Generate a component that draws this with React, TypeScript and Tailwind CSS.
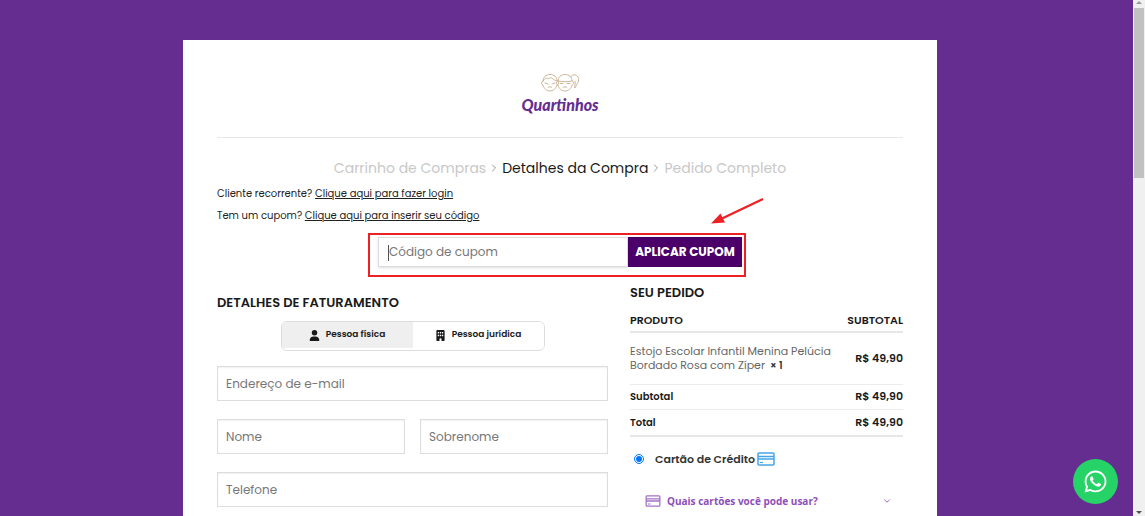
import { ChevronDown, ChevronRight } from "lucide-react";
import { useState } from "react";
import type { ReactNode } from "react";
import { FaBuilding, FaUser, FaWhatsapp } from "react-icons/fa6";

type PersonType = "fisica" | "juridica";

interface FieldProps {
  id: string;
  label: string;
  type?: string;
}

const steps = [
  { label: "Carrinho de Compras", active: false },
  { label: "Detalhes da Compra", active: true },
  { label: "Pedido Completo", active: false },
];

const totals = [
  { label: "Subtotal", value: "R$ 49,90" },
  { label: "Total", value: "R$ 49,90" },
];

const personTypes: { id: PersonType; label: string; icon: ReactNode }[] = [
  { id: "fisica", label: "Pessoa física", icon: <FaUser size={11} /> },
  { id: "juridica", label: "Pessoa jurídica", icon: <FaBuilding size={11} /> },
];

function Field({ id, label, type = "text" }: FieldProps) {
  return (
    <input
      id={id}
      type={type}
      aria-label={label}
      placeholder={label}
      className="h-[35px] w-full min-w-0 border border-[#dddddd] bg-white px-2 text-xs text-[#333333] shadow-[inset_0_1px_2px_rgba(0,0,0,0.06)] outline-none placeholder:text-[#777777]"
    />
  );
}

function Logo() {
  return (
    <a
      href="#inicio"
      aria-label="Quartinhos"
      className="flex flex-col items-center text-[#662d91]"
    >
      <svg
        width="40"
        height="20"
        viewBox="0 0 40 20"
        fill="none"
        stroke="#cdb598"
        strokeWidth="1"
        strokeLinecap="round"
      >
        <path d="M3 8C3 4 6 1.500 10 1.500S17 4 17 8c2 0 2 4 0 4-1 4-4 6-7 6s-6-2-7-6c-2 0-2-4 0-4Z" />
        <path d="M3 8c1-1 2-3 3-3 2 2 4-1 6 0 1 1 3 3 5 3M5 10l3 1M12 11l3-1M8 14.500c1-1 3-1 4 0" />
        <path d="M18 8c0-4 3-6.500 7-6.500S32 4 32 8c2 0 2 4 0 4-1 4-4 6-7 6s-6-2-7-6c-2 0-2-4 0-4Z" />
        <path d="M18 8c4 1 10 1 14 0M20 10.500h3M27 10.500h3M23 14.500c1-1 3-1 4 0" />
        <path d="M31 4c1-3 5-3 7 0 2 4-1 7-3 11-1-2 1-4 0-7" />
      </svg>
      <span className="font-['Lato','Liberation_Sans',sans-serif] text-base leading-6 font-black italic">
        Quartinhos
      </span>
    </a>
  );
}

function CardIcon({ className, size }: { className: string; size: number }) {
  return (
    <svg
      width={size}
      height={size - 4}
      viewBox="0 0 18 14"
      fill="none"
      stroke="currentColor"
      className={className}
    >
      <rect x="1" y="1" width="16" height="12" rx="1" strokeWidth="1.500" />
      <path d="M1 4.500h16M1 7h16" strokeWidth="1.500" />
      <path d="M3 10.500h3" strokeWidth="1.200" />
    </svg>
  );
}

function CouponForm() {
  return (
    <form
      className="relative mx-auto flex h-[30px] w-full max-w-[364px]"
      onSubmit={(e) => e.preventDefault()}
    >
      <input
        type="text"
        aria-label="Código de cupom"
        placeholder="Código de cupom"
        className="min-w-0 flex-1 border border-[#dddddd] bg-white px-2.5 text-xs text-[#333333] shadow-sm outline-none placeholder:text-[#777777]"
      />
      {/* Text caret */}
      <span className="absolute top-2 left-2.5 h-4 w-px bg-[#555555]" />
      <button
        type="submit"
        className="w-[114px] bg-[#4b0069] text-xs font-bold whitespace-nowrap text-white"
      >
        APLICAR CUPOM
      </button>

      {/* Highlight box and arrow */}
      <span className="pointer-events-none absolute -top-1 -right-1 -bottom-2.5 -left-2.5 border-2 border-[#ed2024]" />
      <svg
        width="54"
        height="28"
        viewBox="0 0 54 28"
        className="pointer-events-none absolute -top-10 -right-[22px]"
      >
        <path d="M53 2 12 21.500" stroke="#ed2024" strokeWidth="2.200" />
        <path d="M1 26.500 10.500 16.500 15 25.500Z" fill="#ed2024" />
      </svg>
    </form>
  );
}

function BillingDetails() {
  const [person, setPerson] = useState<PersonType>("fisica");

  return (
    <section className="pt-2.5">
      <h2 className="text-[13px] leading-5 font-semibold text-[#1a1a1a]">
        DETALHES DE FATURAMENTO
      </h2>
      <div className="mx-auto mt-2 flex h-[30px] max-w-[264px] overflow-hidden rounded-md border border-[#dddddd] pb-0.5">
        {personTypes.map(({ id, label, icon }) => (
          <button
            key={id}
            type="button"
            aria-pressed={person === id}
            onClick={() => setPerson(id)}
            className={`flex flex-1 items-center justify-center gap-1.5 text-[9px] font-semibold text-[#1a1a1a] ${
              person === id ? "bg-[#efefef]" : "bg-white"
            }`}
          >
            {icon}
            {label}
          </button>
        ))}
      </div>
      <div className="mt-[15px] flex flex-col gap-[18px]">
        <Field id="email" label="Endereço de e-mail" type="email" />
        <div className="grid grid-cols-2 gap-[15px]">
          <Field id="nome" label="Nome" />
          <Field id="sobrenome" label="Sobrenome" />
        </div>
        <Field id="telefone" label="Telefone" type="tel" />
      </div>
    </section>
  );
}

function OrderSummary() {
  return (
    <section>
      <h2 className="text-[13px] leading-5 font-semibold text-[#1a1a1a]">
        SEU PEDIDO
      </h2>
      <table className="mt-1.5 w-full border-collapse text-[11px] text-[#1a1a1a]">
        <thead>
          <tr className="h-[23px] border-b-2 border-[#e6e6e6]">
            <th className="text-left font-semibold">PRODUTO</th>
            <th className="text-right font-semibold">SUBTOTAL</th>
          </tr>
        </thead>
        <tbody>
          <tr className="h-[52px] border-b border-[#ececec]">
            <td className="leading-[14px] text-[#666666]">
              Estojo Escolar Infantil Menina Pelúcia
              <br />
              Bordado Rosa com Zíper{" "}
              <strong className="ml-0.5 text-[10px] font-semibold text-[#333333]">
                × 1
              </strong>
            </td>
            <td className="text-right font-semibold whitespace-nowrap">
              R$ 49,90
            </td>
          </tr>
          {totals.map(({ label, value }) => (
            <tr
              key={label}
              className="h-[25px] border-b border-[#ececec] last:h-[27px] last:border-b-2 last:border-[#e6e6e6]"
            >
              <th className="text-left text-[10px] font-semibold">{label}</th>
              <td className="text-right font-semibold">{value}</td>
            </tr>
          ))}
        </tbody>
      </table>

      <div className="mt-3 flex items-center pl-1">
        <input
          id="cartao"
          type="radio"
          name="pagamento"
          defaultChecked
          className="size-2.5 accent-[#0075ff]"
        />
        <label
          htmlFor="cartao"
          className="ml-[11px] flex items-center gap-0.5 text-[11px] leading-5 font-semibold text-[#333333]"
        >
          Cartão de Crédito
          <CardIcon size={18} className="text-[#45a5e6]" />
        </label>
      </div>
      <button
        type="button"
        className="mt-[22px] flex w-full items-center gap-1.5 pr-[11px] pl-[15px] font-['Open_Sans','Noto_Sans',sans-serif] text-[10px] leading-5 font-bold text-[#8e4fb8]"
      >
        <CardIcon size={16} className="text-[#a373c4]" />
        Quais cartões você pode usar?
        <ChevronDown size={10} className="ml-auto" />
      </button>
    </section>
  );
}

function ScrollRail() {
  return (
    <div
      aria-hidden="true"
      className="flex w-3 shrink-0 flex-col items-center bg-[#f0f0f0]"
    >
      <span className="mt-px border-x-3 border-b-3 border-x-transparent border-b-[#999999]" />
      <span className="mt-1 h-[33%] w-2.5 bg-[#c1c1c1]" />
      <span className="mt-auto mb-0.5 border-x-3 border-t-3 border-x-transparent border-t-[#505050]" />
    </div>
  );
}

export default function App() {
  return (
    <div className="flex h-screen overflow-hidden bg-[#662d91] font-['Poppins','Inter','Liberation_Sans',sans-serif]">
      <div className="min-w-0 flex-1 overflow-hidden pt-10 pr-[13px]">
        <main className="mx-auto min-h-screen max-w-[754px] bg-white px-[34px]">
          <header className="flex justify-center border-b border-[#e8e8e8] pt-[33px] pb-5">
            <Logo />
          </header>

          <nav
            aria-label="Etapas"
            className="mt-5 flex items-center justify-center gap-0.5 text-sm leading-5"
          >
            {steps.map(({ label, active }, i) => (
              <span key={label} className="flex items-center gap-0.5">
                {i > 0 && <ChevronRight size={12} className="text-[#999999]" />}
                <a
                  href="#etapa"
                  className={active ? "text-[#1a1a1a]" : "text-[#c8c8c8]"}
                >
                  {label}
                </a>
              </span>
            ))}
          </nav>

          <div className="mt-[5px] text-[10px] leading-[22px] text-[#222222]">
            <p>
              Cliente recorrente?{" "}
              <a href="#login" className="underline">
                Clique aqui para fazer login
              </a>
            </p>
            <p>
              Tem um cupom?{" "}
              <a href="#cupom" className="underline">
                Clique aqui para inserir seu código
              </a>
            </p>
          </div>

          <div className="mt-2.5">
            <CouponForm />
          </div>

          <div className="mt-4 grid grid-cols-[391fr_273fr] gap-[22px]">
            <BillingDetails />
            <OrderSummary />
          </div>
        </main>
      </div>

      <ScrollRail />

      <a
        href="#whatsapp"
        aria-label="WhatsApp"
        className="fixed right-[27px] bottom-3 flex size-[45px] items-center justify-center rounded-full bg-[#25d366] text-white"
      >
        <FaWhatsapp size={25} />
      </a>
    </div>
  );
}
